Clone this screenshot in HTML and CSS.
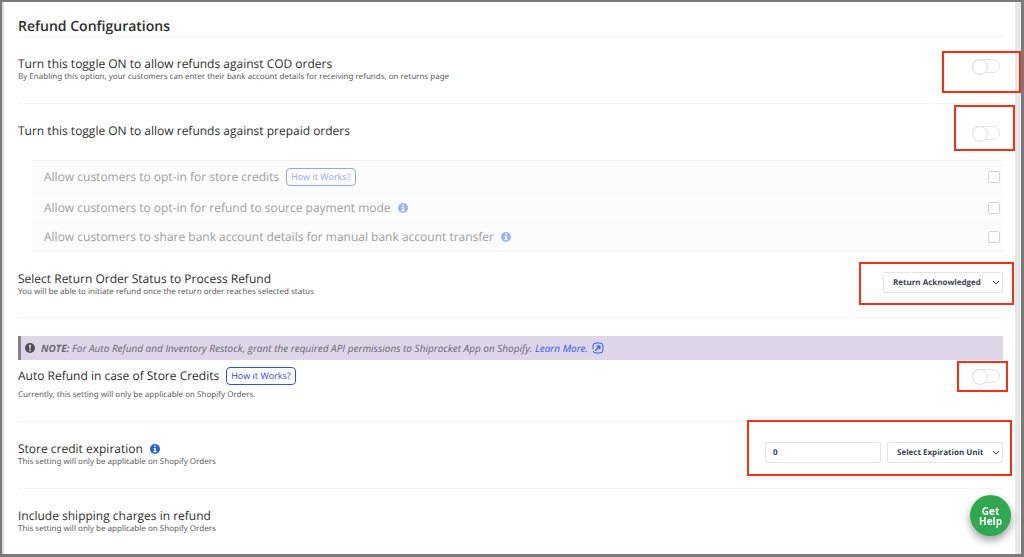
FILE: index.html
```
<!DOCTYPE html>
<html lang="en">
<head>
<meta charset="utf-8">
<meta name="viewport" content="width=device-width, initial-scale=1">
<title>Refund Configurations</title>
<link rel="stylesheet" href="styles.css">
</head>
<body>
<svg class="defs" aria-hidden="true">
  <symbol id="info" viewBox="0 0 10 10"><circle cx="5" cy="5" r="5" fill="currentColor"/><path d="M4.2 1.5h1.6v1.4H4.2zM3.6 3.9h2.2v3.2h.7v1.1h-3V7.1h.8V5h-.7z" fill="#fff"/></symbol>
  <symbol id="alert" viewBox="0 0 10 10"><circle cx="5" cy="5" r="5" fill="currentColor"/><path d="M4 1.8h2L5.7 5.7H4.3zM4.2 6.6h1.6v1.6H4.2z" fill="#ded6e8"/></symbol>
  <symbol id="open" viewBox="0 0 12 12"><rect x="1" y="1" width="10" height="10" rx="3" fill="none" stroke="currentColor"/><path d="M0 7.2h2.4v2H0z" fill="#ded6e8"/><path d="M3.2 8.8 7.4 4.6M4.4 4.2h3.4v3.4" fill="none" stroke="currentColor" stroke-width="1.3"/></symbol>
</svg>
<main class="panel">
  <h1 class="heading">Refund Configurations</h1>

  <section class="row">
    <div class="text">
      <label class="title" for="cod">Turn this toggle ON to allow refunds against COD orders</label>
      <p class="hint">By Enabling this option, your customers can enter their bank account details for receiving refunds, on returns page</p>
    </div>
    <div class="control"><input class="toggle" type="checkbox" role="switch" id="cod"><span class="mark mark-cod"></span></div>
  </section>

  <section class="row row-prepaid">
    <label class="title" for="prepaid">Turn this toggle ON to allow refunds against prepaid orders</label>
    <div class="control"><input class="toggle" type="checkbox" role="switch" id="prepaid"><span class="mark mark-prepaid"></span></div>
  </section>

  <div class="options">
    <div class="option option-tall">
      <label class="title" for="credits">Allow customers to opt-in for store credits</label>
      <button class="how" type="button" disabled>How it Works?</button>
      <input class="check" type="checkbox" id="credits" disabled>
    </div>
    <div class="option">
      <label class="title" for="source">Allow customers to opt-in for refund to source payment mode</label>
      <svg class="icon"><use href="#info"/></svg>
      <input class="check" type="checkbox" id="source" disabled>
    </div>
    <div class="option">
      <label class="title" for="bank">Allow customers to share bank account details for manual bank account transfer</label>
      <svg class="icon"><use href="#info"/></svg>
      <input class="check" type="checkbox" id="bank" disabled>
    </div>
  </div>

  <section class="row row-status">
    <div class="text">
      <label class="title" for="status">Select Return Order Status to Process Refund</label>
      <p class="hint">You will be able to initiate refund once the return order reaches selected status</p>
    </div>
    <div class="control wide"><select class="field select" id="status"><option>Return Acknowledged</option></select><span class="mark mark-status"></span></div>
  </section>

  <p class="note">
    <svg class="icon"><use href="#alert"/></svg>
    <span><strong>NOTE:</strong> For Auto Refund and Inventory Restock, grant the required API permissions to Shiprocket App on Shopify. <a class="link" href="#">Learn More.</a></span>
    <svg class="icon icon-open"><use href="#open"/></svg>
  </p>

  <section class="row row-auto">
    <div class="text">
      <div class="line">
        <label class="title" for="auto">Auto Refund in case of Store Credits</label>
        <button class="how" type="button">How it Works?</button>
      </div>
      <p class="hint">Currently, this setting will only be applicable on Shopify Orders.</p>
    </div>
    <div class="control"><input class="toggle" type="checkbox" role="switch" id="auto"><span class="mark mark-auto"></span></div>
  </section>

  <section class="row">
    <div class="text">
      <div class="line">
        <label class="title" for="expiry">Store credit expiration</label>
        <svg class="icon"><use href="#info"/></svg>
      </div>
      <p class="hint">This setting will only be applicable on Shopify Orders</p>
    </div>
    <div class="control wide">
      <input class="field" type="text" id="expiry" value="0">
      <select class="field select" aria-label="Expiration unit"><option>Select Expiration Unit</option></select>
      <span class="mark mark-expiry"></span>
    </div>
  </section>

  <section class="row row-last">
    <div class="text">
      <h2 class="title">Include shipping charges in refund</h2>
      <p class="hint">This setting will only be applicable on Shopify Orders</p>
    </div>
  </section>
</main>
<button class="help" type="button">Get Help</button>
</body>
</html>
```
FILE: styles.css
```
* { box-sizing: border-box; }

body {
  margin: 0;
  min-height: 100vh;
  display: flex;
  border: solid #7b7979;
  border-width: 2px 3px 3px 2px;
  background: #fff;
  color: #2e2e2e;
  font-family: "Open Sans", "Noto Sans", sans-serif;
  font-size: 12px;
  line-height: 16px;
  text-rendering: geometricPrecision;
}

.defs { position: absolute; width: 0; height: 0; }

.panel {
  flex: 1;
  min-width: 0;
  padding: 0 12px 0 14px;
  border-left: 2px solid #dcdcdc;
  border-right: 6px solid #e9e9e9;
}

.heading {
  margin: 0;
  padding: 16px 0 0;
  border-bottom: 1px solid #f3f3f3;
  font-size: 14px;
  font-weight: 600;
  line-height: 18px;
}

.row {
  display: flex;
  justify-content: space-between;
  align-items: flex-start;
  min-height: 67px;
  padding-top: 19px;
  border-bottom: 1px solid #f5f5f5;
}

.row-prepaid { min-height: 56px; border-bottom: 0; }
.row-status { min-height: 66px; }
.row-auto { min-height: 62px; padding-top: 7px; }
.row-last { min-height: 0; border-bottom: 0; }

.title { margin: 0; font-size: 12px; font-weight: 400; line-height: 16px; }

.hint {
  margin: 0;
  color: #606060;
  font-family: "Noto Sans", "Open Sans", sans-serif;
  font-size: 8px;
  line-height: 10px;
}

.row-auto .hint { margin-top: 5px; }
.line { display: flex; align-items: center; gap: 7px; }
.row-auto .line { height: 18px; }

.control { position: relative; display: flex; gap: 6px; padding: 3px 3px 0 0; }
.row-auto .control { padding-top: 2px; }
.control.wide { padding: 1px 0 0; }

.toggle {
  appearance: none;
  width: 28px;
  height: 14px;
  margin: 0;
  border: 1px solid #e6e6e6;
  border-radius: 7px;
  background: #fff;
}

.toggle::before {
  content: "";
  display: block;
  width: 14px;
  height: 14px;
  margin: -1px;
  border: 1px solid #dedede;
  border-radius: 50%;
  background: #fff;
}

.options {
  margin-left: 14px;
  background: #fcfcfc;
  border-top: 1px solid #f4f4f4;
}

.option {
  display: flex;
  align-items: center;
  gap: 7px;
  min-height: 29px;
  padding: 0 3px 0 12px;
  border-bottom: 1px solid #f5f5f5;
}

.option-tall { min-height: 33px; }
.option .title { color: #a0a0a0; }
.option .icon { opacity: .45; }

.check {
  appearance: none;
  width: 12px;
  height: 12px;
  margin: 0 0 0 auto;
  border: 1px solid #d4d4d4;
  border-radius: 2px;
  background: #fff;
}

.icon { width: 10px; height: 10px; flex: none; color: #2462e0; }

.how {
  height: 18px;
  padding: 0 4px;
  border: 1px solid #2b4eff;
  border-radius: 4px;
  background: #fff;
  color: #2b4eff;
  font: 9px/16px "Open Sans", "Noto Sans", sans-serif;
  text-rendering: inherit;
}

.how:disabled { opacity: .5; }

.field {
  width: 116px;
  height: 21px;
  padding: 0 7px;
  border: 1px solid #e5e5e5;
  border-radius: 2px;
  background: #fff;
  color: #3b3f55;
  font: 700 8px/19px "Open Sans", "Noto Sans", sans-serif;
  text-rendering: inherit;
}

.select {
  appearance: none;
  width: 120px;
  padding: 0 19px 0 9px;
  background: #fff url("data:image/svg+xml,%3Csvg xmlns='http://www.w3.org/2000/svg' width='8' height='6'%3E%3Cpath d='M1 1l3 3 3-3' fill='none' stroke='%23444'/%3E%3C/svg%3E") no-repeat right 2px center;
}

.field + .select { width: 116px; }

.note {
  display: flex;
  align-items: center;
  gap: 6px;
  min-height: 24px;
  margin: 18px 0 0;
  padding-left: 4px;
  border-left: 3px solid #858188;
  background: #ded6e8;
  color: #6a6670;
  font-size: 10px;
  font-style: italic;
}

.note .icon { color: #514d55; }
.note .icon-open { width: 12px; height: 12px; margin-left: -2px; color: #2b5df5; }
.link { color: #2b5df5; text-decoration: none; }

.mark {
  position: absolute;
  border: 2px solid #ff2d0f;
  pointer-events: none;
}

.mark-cod { inset: -5px -18px -20px -30px; }
.mark-prepaid { inset: -18px -12px -11px -18px; }
.mark-status { inset: -9px -11px -12px -24px; }
.mark-auto { inset: -6px -5px -9px -15px; }
.mark-expiry { inset: -21px -9px -13px -18px; }

.help {
  position: fixed;
  right: 13px;
  bottom: 21px;
  width: 41px;
  height: 41px;
  padding: 0 8px;
  border: 0;
  border-radius: 50%;
  background: #30a84f;
  box-shadow: 0 4px 8px rgba(0, 0, 0, .4);
  color: #fff;
  font: 700 10px/10px "Open Sans", "Noto Sans", sans-serif;
}
```
